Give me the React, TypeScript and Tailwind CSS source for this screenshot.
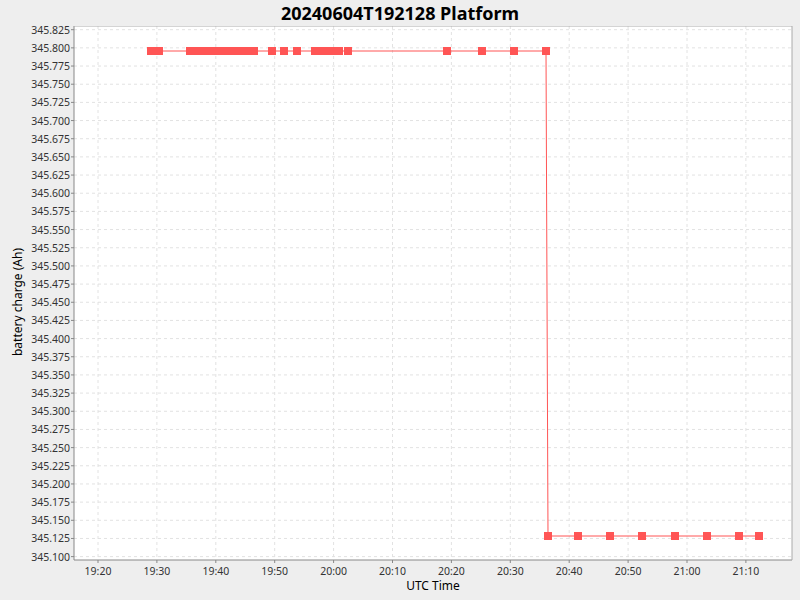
import React from "react";

const L = 74, R = 792, T = 26, B = 560;
const yOf = (i: number) => 29.7 + 18.17 * i;
const xOf = (i: number) => 98 + 58.9 * i;
const top = [151, 159, 190, 194, 198, 202, 206, 210, 214, 218, 222, 226, 230, 234, 238, 242, 246, 250, 254, 272, 284, 297, 315, 319, 323, 327, 331, 339, 348, 447, 482, 514, 546];
const bot = [548, 578, 610, 642, 675, 707, 739, 759];
const times = ["19:20","19:30","19:40","19:50","20:00","20:10","20:20","20:30","20:40","20:50","21:00","21:10"];

export default function App() {
  return (
    <div className="w-[800px] h-[600px] bg-[#eeeeee] flex flex-col font-['DejaVu_Sans',sans-serif]">
      <div className="h-[26px] flex items-center justify-center text-[18px] font-bold text-black leading-none">
        20240604T192128 Platform
      </div>
      <svg width={800} height={574} viewBox="0 26 800 574" className="font-['DejaVu_Sans',sans-serif]">
        <rect x={L} y={T} width={R - L} height={B - T} fill="#fff" />
        {Array.from({ length: 30 }, (_, i) => (
          <g key={i}>
            <line x1={L} x2={R} y1={yOf(i)} y2={yOf(i)} stroke="#e2e2e2" strokeDasharray="3 3" />
            <line x1={L - 3} x2={L} y1={yOf(i)} y2={yOf(i)} stroke="#888" />
            <text x={L - 4} y={yOf(i) + 4} fontSize={10.5} textAnchor="end" fill="#333">{(345.825 - 0.025 * i).toFixed(3)}</text>
          </g>
        ))}
        {times.map((t, i) => (
          <g key={t}>
            <line x1={xOf(i)} x2={xOf(i)} y1={T} y2={B} stroke="#e2e2e2" strokeDasharray="3 3" />
            <line x1={xOf(i)} x2={xOf(i)} y1={B} y2={B + 3} stroke="#888" />
            <text x={xOf(i)} y={B + 15} fontSize={10.5} textAnchor="middle" fill="#333">{t}</text>
          </g>
        ))}
        <line x1={L} x2={L} y1={T} y2={B} stroke="#888" />
        <line x1={L} x2={R} y1={B} y2={B} stroke="#888" />
        <line x1={R} x2={R} y1={T} y2={B} stroke="#aaa" />
        <line x1={L} x2={R} y1={T} y2={T} stroke="#aaa" />
        <polyline points="151,51 546,51 548,536 759,536" fill="none" stroke="#ff5555" strokeWidth={1} />
        {top.map((x, i) => <rect key={"t" + i} x={x - 4} y={47} width={8} height={8} fill="#ff5555" />)}
        {bot.map((x, i) => <rect key={"b" + i} x={x - 4} y={532} width={8} height={8} fill="#ff5555" />)}
        <text x={433} y={590} fontSize={12} textAnchor="middle" fill="#000">UTC Time</text>
        <text transform="translate(22,302) rotate(-90)" fontSize={12} textAnchor="middle" fill="#000">battery charge (Ah)</text>
      </svg>
    </div>
  );
}
